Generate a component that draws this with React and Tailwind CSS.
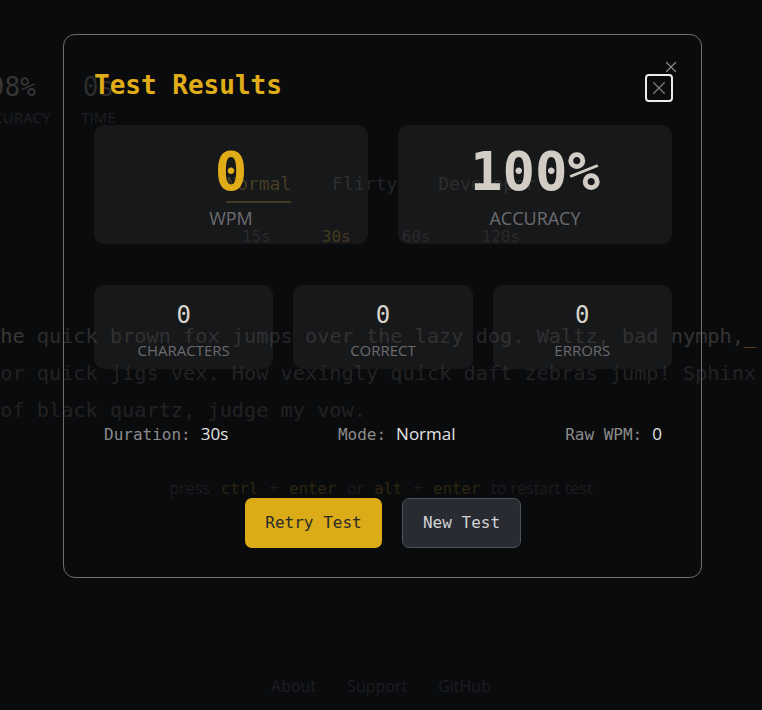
import React from "react";

const mono = "font-['DejaVu_Sans_Mono',monospace]";
const sans = "font-['Open_Sans',sans-serif]";

function XIcon({ size, stroke = 1.5, className }) {
  return (
    <svg width={size} height={size} viewBox="0 0 16 16" className={className} fill="none" stroke="currentColor" strokeWidth={stroke} strokeLinecap="round">
      <path d="M2 2 L14 14 M14 2 L2 14" />
    </svg>
  );
}

function Background() {
  return (
    <div className="flex flex-col items-center pt-[71px]">
      {/* stats */}
      <div className="flex gap-[31px] self-start ml-[-93px]">
        {[
          ["0", "WPM", "text-[#2a2a2a]"],
          ["98%", "ACCURACY", "text-[#363636]"],
          ["0s", "TIME", "text-[#2c2c2c]"],
        ].map(([v, l, c]) => (
          <div key={l} className="flex flex-col items-center">
            <div className={`${mono} ${c} text-[26px] leading-[32px]`}>{v}</div>
            <div className={`${sans} mt-[4px] text-[15px] leading-[20px] text-[#1f2022]`}>{l}</div>
          </div>
        ))}
      </div>

      {/* modes */}
      <div className={`${mono} mt-[45px] flex gap-[41px] text-[18px] leading-[24px]`}>
        <div className="border-b-2 border-[#393017] pb-[5px] text-[#3d3318]">Normal</div>
        <div className="text-[#242425]">Flirty</div>
        <div className="text-[#222223]">Developer</div>
      </div>

      {/* durations */}
      <div className={`${mono} mt-[22px] flex gap-[51px] text-[16px] leading-[24px] text-[#1f1f20]`}>
        <span>15s</span>
        <span className="text-[#3a3016]">30s</span>
        <span>60s</span>
        <span>120s</span>
      </div>

      {/* text */}
      <div className={`${mono} mt-[69px] self-start ml-[-12px] whitespace-pre text-[20.25px] leading-[37px] text-[#262627]`}>
        <div>
          <span className="text-[#3a3835]">The</span>{" "}
          <span className="text-[#2c2c2c]">quick</span>{" brown fox jumps over the lazy dog. Waltz, bad "}
          <span className="text-[#353433]">nymph,</span>
          <span className="text-[#5c3c1c]">_</span>
        </div>
        <div className="text-[#222223]">for quick jigs vex. How vexingly quick daft zebras jump! Sphinx</div>
        <div className="text-[#222223]"> of black quartz, judge my vow.</div>
      </div>

      {/* hint */}
      <div className="mt-[47px] flex items-baseline gap-[11px] text-[16px] leading-[24px]">
        <span className={`${sans} text-[#1c1c1e]`}>press</span>
        <span className={`${mono} text-[15.5px] text-[#2e2610]`}>ctrl</span>
        <span className={`${sans} text-[#1c1c1e]`}>+</span>
        <span className={`${mono} text-[15.5px] text-[#2e2610]`}>enter</span>
        <span className={`${sans} text-[#1c1c1e]`}>or</span>
        <span className={`${mono} text-[15.5px] text-[#2e2610]`}>alt</span>
        <span className={`${sans} text-[#1c1c1e]`}>+</span>
        <span className={`${mono} text-[15.5px] text-[#2e2610]`}>enter</span>
        <span className={`${sans} text-[#1c1c1e]`}>to restart test</span>
      </div>

      {/* footer */}
      <div className={`${sans} mt-[173px] flex gap-[31px] text-[16px] leading-[24px] text-[#1d1e21]`}>
        <span>About</span>
        <span>Support</span>
        <span>GitHub</span>
      </div>
    </div>
  );
}

function BigCard({ value, label, color }) {
  return (
    <div className="flex h-[119px] flex-col items-center rounded-[10px] bg-white/[0.055] pt-[20px]">
      <div className={`${mono} ${color} text-[54px] font-bold leading-[54px]`}>{value}</div>
      <div className={`${sans} mt-[7px] text-[18px] leading-[24px] text-[#6c6c70]`}>{label}</div>
    </div>
  );
}

function SmallCard({ value, label }) {
  return (
    <div className="flex h-[84px] flex-col items-center rounded-[10px] bg-white/[0.055] pt-[14px]">
      <div className={`${mono} text-[24px] leading-[32px] text-[#d8d4cc]`}>{value}</div>
      <div className={`${sans} mt-[9px] text-[15px] leading-[20px] text-[#6b6b6f]`}>{label}</div>
    </div>
  );
}

function Info({ label, value }) {
  return (
    <div className="flex items-baseline">
      <span className={`${mono} text-[16px] leading-[24px] text-[#8c8c8c]`}>{label}</span>
      <span className={`${sans} ml-[10px] text-[17px] leading-[24px] text-[#e4e4e4]`}>{value}</span>
    </div>
  );
}

function Modal() {
  return (
    <div className="absolute left-[63px] top-[34px] w-[639px] rounded-[12px] border border-[#6f6f72] pt-[30px] pl-[30px] pr-[29px] pb-[29px]">
      <button className="absolute right-[24px] top-[26px] text-[#8a8a8a]">
        <XIcon size={12} stroke={1.6} />
      </button>
      <div className="flex h-[46px] items-start justify-between">
        <h2 className={`${mono} text-[26px] font-bold leading-[40px] text-[#e0ad19]`}>Test Results</h2>
        <button className="mt-[9px] mr-[-1px] flex h-[28px] w-[28px] items-center justify-center rounded-[4px] border-2 border-[#ececec] text-[#7a7a7c]">
          <XIcon size={14} stroke={1.6} />
        </button>
      </div>

      <div className="mt-[14px] grid grid-cols-2 gap-[30px]">
        <BigCard value="0" label="WPM" color="text-[#e0ad19]" />
        <BigCard value="100%" label="ACCURACY" color="text-[#d1cdc5]" />
      </div>

      <div className="mt-[41px] grid grid-cols-3 gap-[20px]">
        <SmallCard value="0" label="CHARACTERS" />
        <SmallCard value="0" label="CORRECT" />
        <SmallCard value="0" label="ERRORS" />
      </div>

      <div className="mt-[53px] flex justify-between px-[10px]">
        <Info label="Duration:" value="30s" />
        <Info label="Mode:" value="Normal" />
        <Info label="Raw WPM:" value="0" />
      </div>

      <div className="mt-[51px] flex justify-center gap-[20px]">
        <button className={`${mono} h-[50px] w-[137px] rounded-[7px] bg-[#dcab18] text-[16px] text-[#2a2a2a]`}>Retry Test</button>
        <button className={`${mono} h-[50px] w-[119px] rounded-[7px] border border-[#4e5159] bg-[#282b32] text-[16px] text-[#d2d2d2]`}>New Test</button>
      </div>
    </div>
  );
}

export default function App() {
  return (
    <div className="relative h-[710px] w-full overflow-hidden bg-[#0a0b0d]">
      <Background />
      <Modal />
    </div>
  );
}
